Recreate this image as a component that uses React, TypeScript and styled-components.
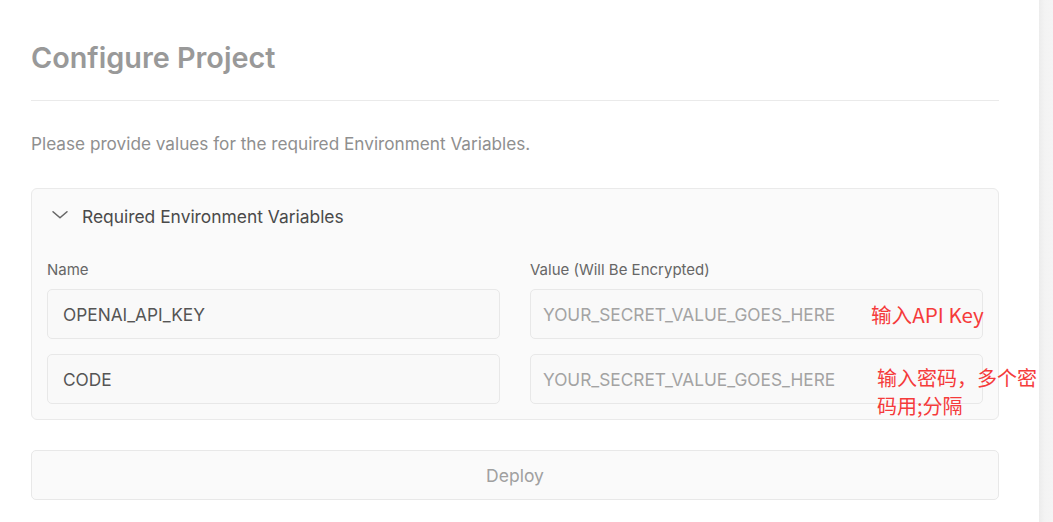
import React from "react";
import styled, { createGlobalStyle } from "styled-components";

const GlobalStyle = createGlobalStyle`
  html, body { margin: 0; padding: 0; background: #fff; }
  body { font-family: Inter, "Noto Sans", sans-serif; }
  * { box-sizing: border-box; }
`;

const Page = styled.div`
  display: flex;
  width: 1053px;
  height: 522px;
  overflow: hidden;
`;

const Main = styled.main`
  flex: 1;
  padding: 40px 0 0 31px;
`;

const Scrollbar = styled.div`
  width: 14px;
  background: linear-gradient(to right, #ececec, #f3f3f3 40%, #f5f5f5);
`;

const Content = styled.div`
  width: 968px;
  display: flex;
  flex-direction: column;
`;

const Title = styled.h1`
  margin: 0;
  font-size: 28.8px;
  line-height: 36px;
  font-weight: 600;
  color: #999;
`;

const Divider = styled.hr`
  margin: 24px 0 0;
  border: none;
  border-top: 1px solid #eaeaea;
`;

const Intro = styled.p`
  margin: 31px 0 0;
  font-size: 17.2px;
  line-height: 24px;
  color: #8f8f8f;
`;

const Card = styled.section`
  margin-top: 32px;
  background: #fafafa;
  border: 1px solid #eaeaea;
  border-radius: 6px;
`;

const CardHeader = styled.div`
  display: flex;
  align-items: center;
  gap: 10px;
  padding: 16px 16px;
  font-size: 17.4px;
  line-height: 24px;
  font-weight: 400;
  color: #4a4a4a;
`;

const CardBody = styled.div`
  display: grid;
  grid-template-columns: 1fr 1fr;
  column-gap: 30px;
  padding: 15px;
`;

const Column = styled.div`
  display: flex;
  flex-direction: column;
  gap: 15px;
`;

const Label = styled.div`
  font-size: 15px;
  line-height: 20px;
  color: #666;
  margin-bottom: -6px;
`;

const Field = styled.div<{ $placeholder?: boolean }>`
  position: relative;
  height: 50px;
  display: flex;
  align-items: center;
  padding: 0 15px 0 ${(p) => (p.$placeholder ? 12 : 15)}px;
  background: #f9f9f9;
  border: 1px solid #e8e8e8;
  border-radius: 5px;
  font-size: 17.3px;
  color: ${(p) => (p.$placeholder ? "#a3a3a3" : "#555")};
`;

const Note = styled.span<{ $left: number; $top: number; $width?: number }>`
  position: absolute;
  left: ${(p) => p.$left}px;
  top: ${(p) => p.$top}px;
  width: ${(p) => (p.$width ? `${p.$width}px` : "auto")};
  white-space: ${(p) => (p.$width ? "normal" : "nowrap")};
  font-family: "Noto Sans CJK SC", "Noto Sans", sans-serif;
  font-size: 20px;
  line-height: 28px;
  color: #f53b3b;
`;

const WideNote = styled(Note)`
  font-size: 20.6px;
`;

const DeployButton = styled.button`
  margin-top: 30px;
  height: 50px;
  width: 100%;
  background: #fafafa;
  border: 1px solid #e8e8e8;
  border-radius: 5px;
  font-family: Inter, "Noto Sans", sans-serif;
  font-size: 17.5px;
  color: #a0a0a0;
`;

const Chevron = () => (
  <svg width="24" height="24" viewBox="0 0 24 24" fill="none" stroke="#666" strokeWidth="1.5" strokeLinecap="round" strokeLinejoin="round">
    <path d="M5 9l7 7 7-7" transform="translate(0 -1) scale(1 0.86)" />
  </svg>
);

export default function App() {
  return (
    <>
      <GlobalStyle />
      <Page>
        <Main>
          <Content>
            <Title>Configure Project</Title>
            <Divider />
            <Intro>Please provide values for the required Environment Variables.</Intro>
            <Card>
              <CardHeader>
                <Chevron />
                Required Environment Variables
              </CardHeader>
              <CardBody>
                <Column>
                  <Label>Name</Label>
                  <Field>OPENAI_API_KEY</Field>
                  <Field>CODE</Field>
                </Column>
                <Column>
                  <Label>Value (Will Be Encrypted)</Label>
                  <Field $placeholder>
                    YOUR_SECRET_VALUE_GOES_HERE
                    <WideNote $left={340} $top={10}>输入API Key</WideNote>
                  </Field>
                  <Field $placeholder>
                    YOUR_SECRET_VALUE_GOES_HERE
                    <Note $left={346} $top={9} $width={166}>输入密码，多个密码用;分隔</Note>
                  </Field>
                </Column>
              </CardBody>
            </Card>
            <DeployButton>Deploy</DeployButton>
          </Content>
        </Main>
        <Scrollbar />
      </Page>
    </>
  );
}
